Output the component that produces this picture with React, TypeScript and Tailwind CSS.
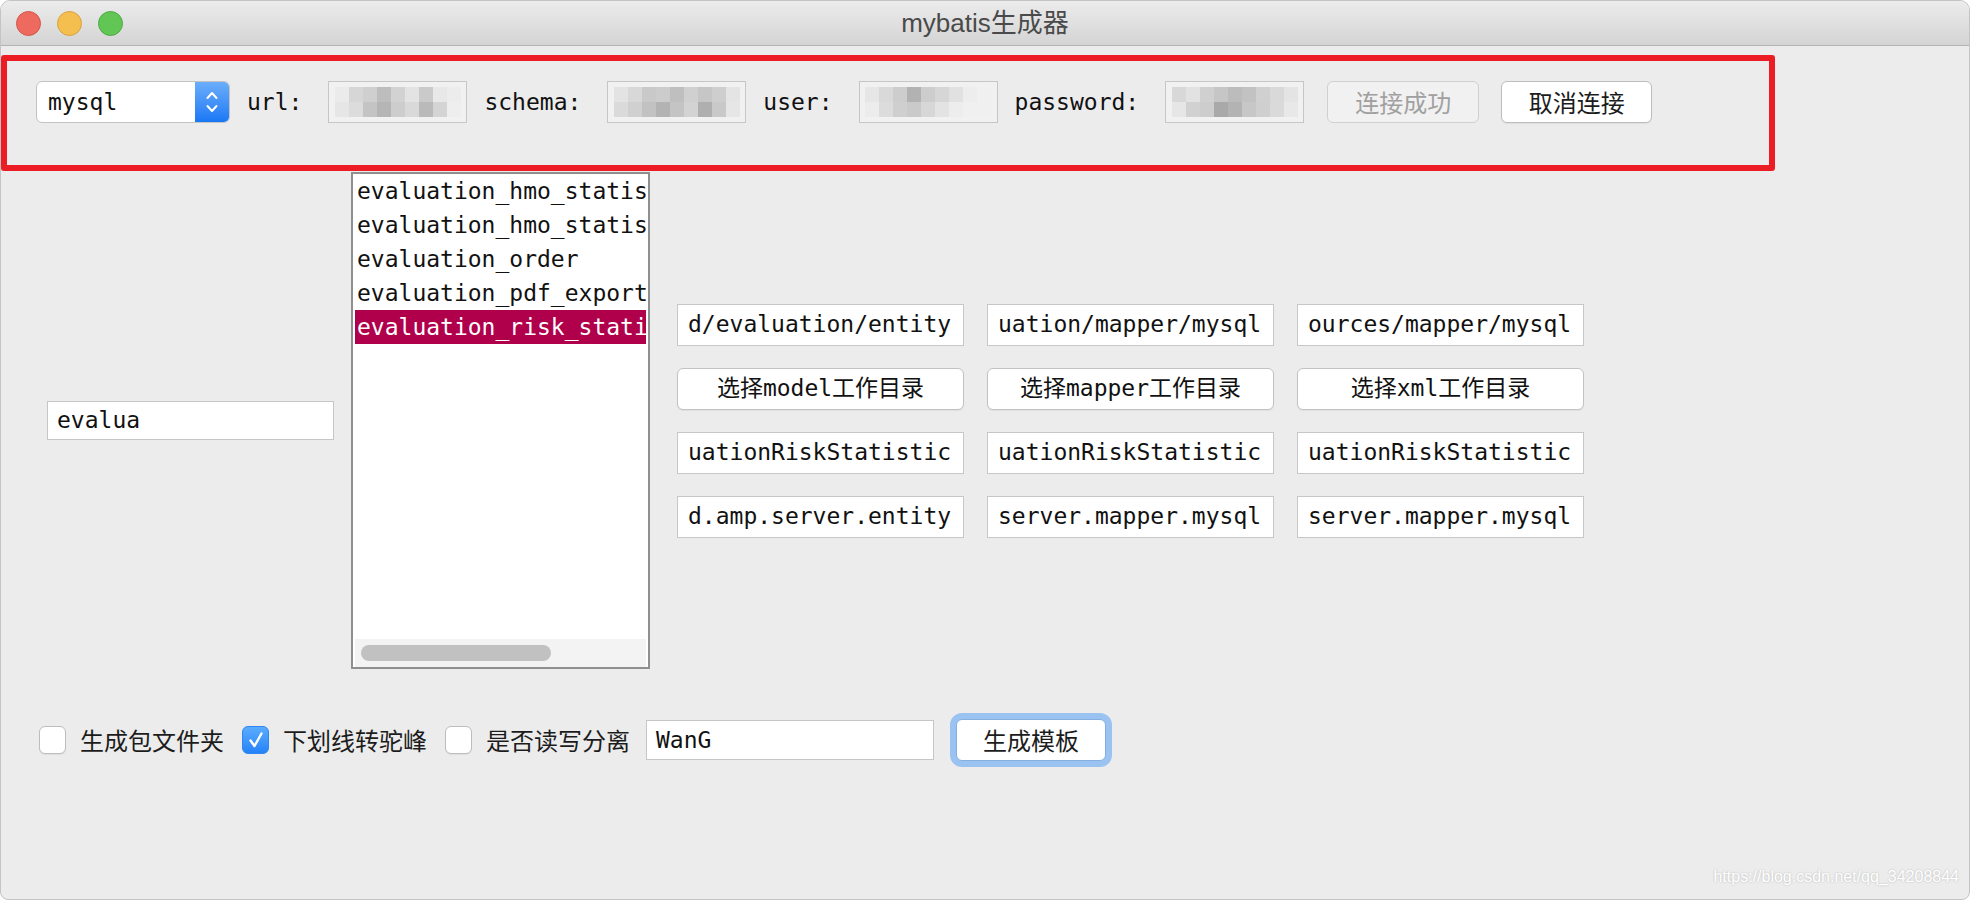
import React from 'react';

const mono = "font-['DejaVu_Sans_Mono','Noto_Sans_CJK_SC',monospace]";
const cjk = "font-['Noto_Sans_CJK_SC','Liberation_Sans',sans-serif]";

const tables = [
  'evaluation_hmo_statistic',
  'evaluation_hmo_statistic_day',
  'evaluation_order',
  'evaluation_pdf_export_log',
  'evaluation_risk_statistic',
];

const pathFields = ['d/evaluation/entity', 'uation/mapper/mysql', 'ources/mapper/mysql'];
const dirButtons = ['选择model工作目录', '选择mapper工作目录', '选择xml工作目录'];
const nameFields = ['uationRiskStatistic', 'uationRiskStatistic', 'uationRiskStatistic'];
const pkgFields = ['d.amp.server.entity', 'server.mapper.mysql', 'server.mapper.mysql'];

// fake pixelated (masked) values in the connection inputs
const masks: string[][] = [
  ['#ebebeb', '#d6d6d6', '#cfcfcf', '#bdbdbd', '#d2d2d2', '#e3e3e3', '#cacaca', '#e8e8e8', '#ececec',
   '#e6e6e6', '#dcdcdc', '#c4c4c4', '#b5b5b5', '#cdcdcd', '#d9d9d9', '#bababa', '#d4d4d4', '#eeeeee'],
  ['#e3e3e3', '#d8d8d8', '#c9c9c9', '#cccccc', '#bfbfbf', '#d0d0d0', '#c6c6c6', '#cecece', '#e4e4e4',
   '#dadada', '#d0d0d0', '#c2c2c2', '#b3b3b3', '#c4c4c4', '#d3d3d3', '#afafaf', '#c9c9c9', '#e6e6e6'],
  ['#e6e6e6', '#d9d9d9', '#cdcdcd', '#b2b2b2', '#cdcdcd', '#d6d6d6', '#e1e1e1', '#ededed', '#f0f0f0',
   '#ececec', '#dcdcdc', '#cfcfcf', '#cacaca', '#d7d7d7', '#e3e3e3', '#ededed', '#f0f0f0', '#f0f0f0'],
  ['#d8d8d8', '#e2e2e2', '#d0d0d0', '#c6c6c6', '#bcbcbc', '#c2c2c2', '#d0d0d0', '#d9d9d9', '#e4e4e4',
   '#e6e6e6', '#d1d1d1', '#cdcdcd', '#a9a9a9', '#b3b3b3', '#c7c7c7', '#cfcfcf', '#dadada', '#e8e8e8'],
];

function MaskedInput({ cells }: { cells: string[] }) {
  return (
    <div className="h-[42px] w-[139px] shrink-0 border border-[#c6c6c6] bg-[#f1f1f1] flex items-center justify-center overflow-hidden">
      <div className="grid grid-cols-[repeat(9,14px)] grid-rows-[repeat(2,15px)] blur-[0.6px]">
        {cells.map((c, i) => (
          <div key={i} style={{ background: c }} />
        ))}
      </div>
    </div>
  );
}

function Label({ text }: { text: string }) {
  return <span className={`${mono} text-[23px] text-[#111] pr-[9px] whitespace-nowrap`}>{text}</span>;
}

function Checkbox({ checked }: { checked?: boolean }) {
  if (checked) {
    return (
      <div className="w-[27px] h-[28px] rounded-[6px] border border-[#2f86ee] bg-linear-to-b from-[#5aacfd] to-[#2583f8] flex items-center justify-center shrink-0">
        <svg width="16" height="18" viewBox="0 0 16 18">
          <path d="M2.5 9.5 L6.5 15 L13.5 2.5" fill="none" stroke="white" strokeWidth="2.4" strokeLinecap="round" strokeLinejoin="round" />
        </svg>
      </div>
    );
  }
  return <div className="w-[27px] h-[28px] rounded-[6px] border border-[#bdbdbd] bg-white shadow-[0_1px_1px_rgba(0,0,0,0.06)] shrink-0" />;
}

export default function App() {
  return (
    <div className="w-[1970px] h-[900px] bg-white">
      <div className="relative h-full flex flex-col rounded-t-[10px] rounded-b-[8px] border border-[#c4c4c4] bg-[#ececec] overflow-hidden">
        {/* title bar */}
        <div className="relative h-[45px] shrink-0 flex items-center bg-linear-to-b from-[#ececec] to-[#d4d4d4] border-b border-[#b4b4b4]">
          <div className="flex items-center gap-[16px] pl-[15px]">
            <div className="w-[25px] h-[25px] rounded-full bg-[#ee6a5f] border border-[#d5544a]" />
            <div className="w-[25px] h-[25px] rounded-full bg-[#f5bf4f] border border-[#d8a13f]" />
            <div className="w-[25px] h-[25px] rounded-full bg-[#62c655] border border-[#4ea944]" />
          </div>
          <div className="absolute inset-0 flex items-center justify-center pointer-events-none">
            <span className="font-['Liberation_Sans','Noto_Sans_CJK_SC',sans-serif] text-[26px] text-[#4a4a4a]">mybatis生成器</span>
          </div>
        </div>

        {/* connection bar */}
        <div className="flex items-center gap-[17px] pl-[35px] pt-[35px]">
          <div className="flex h-[42px] w-[194px] shrink-0 rounded-[6px] border border-[#c3c3c3] bg-white overflow-hidden">
            <div className={`${mono} flex-1 flex items-center pl-[11px] text-[23px] text-[#111]`}>mysql</div>
            <div className="w-[34px] bg-linear-to-b from-[#6aaefa] to-[#1877f5] flex items-center justify-center">
              <svg width="16" height="28" viewBox="0 0 16 28">
                <path d="M3.5 10 L8 5 L12.5 10" fill="none" stroke="white" strokeWidth="2" strokeLinecap="round" strokeLinejoin="round" />
                <path d="M3.5 18 L8 23 L12.5 18" fill="none" stroke="white" strokeWidth="2" strokeLinecap="round" strokeLinejoin="round" />
              </svg>
            </div>
          </div>
          <Label text="url:" />
          <MaskedInput cells={masks[0]} />
          <Label text="schema:" />
          <MaskedInput cells={masks[1]} />
          <Label text="user:" />
          <MaskedInput cells={masks[2]} />
          <Label text="password:" />
          <MaskedInput cells={masks[3]} />
          <div className="flex items-center gap-[22px] ml-[6px]">
            <button className={`${cjk} w-[152px] h-[42px] rounded-[6px] border border-[#d0d0d0] bg-[#f1f1f1] text-[24px] text-[#a0a0a0]`}>
              连接成功
            </button>
            <button className={`${cjk} w-[151px] h-[42px] rounded-[6px] border border-[#bdbdbd] bg-white text-[24px] text-[#1c1c1c] shadow-[0_1px_1px_rgba(0,0,0,0.06)]`}>
              取消连接
            </button>
          </div>
        </div>

        {/* main area */}
        <div className="flex items-center mt-[49px]">
          <div className="ml-[46px] w-[287px] h-[39px] border border-[#c6c6c6] bg-white flex items-center pl-[9px]">
            <span className={`${mono} text-[23px] text-[#111]`}>evalua</span>
          </div>

          <div className="ml-[17px] w-[299px] h-[497px] border-2 border-[#8f8f8f] bg-white flex flex-col px-[2px]">
            <div className="flex-1 overflow-hidden">
              {tables.map((t, i) => (
                <div
                  key={t}
                  className={`${mono} h-[34px] flex items-center pl-[2px] text-[23px] whitespace-nowrap overflow-hidden ${
                    i === 4 ? 'bg-[#b1004b] text-white' : 'text-[#111]'
                  }`}
                >
                  {t}
                </div>
              ))}
            </div>
            <div className="h-[28px] bg-[#f3f3f3] flex items-center px-[6px]">
              <div className="w-[190px] h-[16px] rounded-full bg-[#c1c1c1]" />
            </div>
          </div>

          <div className="ml-[27px] grid grid-cols-[repeat(3,287px)] gap-x-[23px] gap-y-[22px]">
            {[pathFields, null, nameFields, pkgFields].map((row, r) =>
              row === null
                ? dirButtons.map((b) => (
                    <button
                      key={b}
                      className={`${mono} h-[42px] rounded-[6px] border border-[#c2c2c2] bg-white text-[23px] text-[#111] shadow-[0_1px_1px_rgba(0,0,0,0.06)]`}
                    >
                      {b}
                    </button>
                  ))
                : row.map((v, c) => (
                    <div
                      key={`${r}-${c}`}
                      className={`${mono} h-[42px] border border-[#c7c7c7] bg-white flex items-center pl-[10px] overflow-hidden whitespace-nowrap text-[23px] text-[#111]`}
                    >
                      {v}
                    </div>
                  ))
            )}
          </div>
        </div>

        {/* options row */}
        <div className="flex items-center h-[54px] mt-[44px] pl-[38px]">
          <Checkbox />
          <span className={`${cjk} ml-[14px] text-[24px] text-[#1c1c1c]`}>生成包文件夹</span>
          <div className="ml-[18px]"><Checkbox checked /></div>
          <span className={`${cjk} ml-[14px] text-[24px] text-[#1c1c1c]`}>下划线转驼峰</span>
          <div className="ml-[18px]"><Checkbox /></div>
          <span className={`${cjk} ml-[14px] text-[24px] text-[#1c1c1c]`}>是否读写分离</span>
          <div className="ml-[16px] w-[288px] h-[40px] border border-[#c6c6c6] bg-white flex items-center pl-[9px]">
            <span className={`${mono} text-[23px] text-[#111]`}>WanG</span>
          </div>
          <div className="ml-[16px] p-[6px] rounded-[12px] bg-[#9bc3f2]">
            <button className={`${cjk} w-[150px] h-[42px] rounded-[6px] border border-[#86aee0] bg-white text-[24px] text-[#1c1c1c]`}>
              生成模板
            </button>
          </div>
        </div>

        {/* watermark */}
        <div className="absolute right-[10px] bottom-[10px] font-['Liberation_Sans',sans-serif] text-[16px] text-white [text-shadow:0_0_2px_rgba(0,0,0,0.25)]">
          https://blog.csdn.net/qq_34208844
        </div>

        {/* red highlight annotation */}
        <div className="absolute left-0 top-[54px] w-[1774px] h-[116px] border-[6px] border-[#ec1c24] rounded-[3px] pointer-events-none" />
      </div>
    </div>
  );
}
